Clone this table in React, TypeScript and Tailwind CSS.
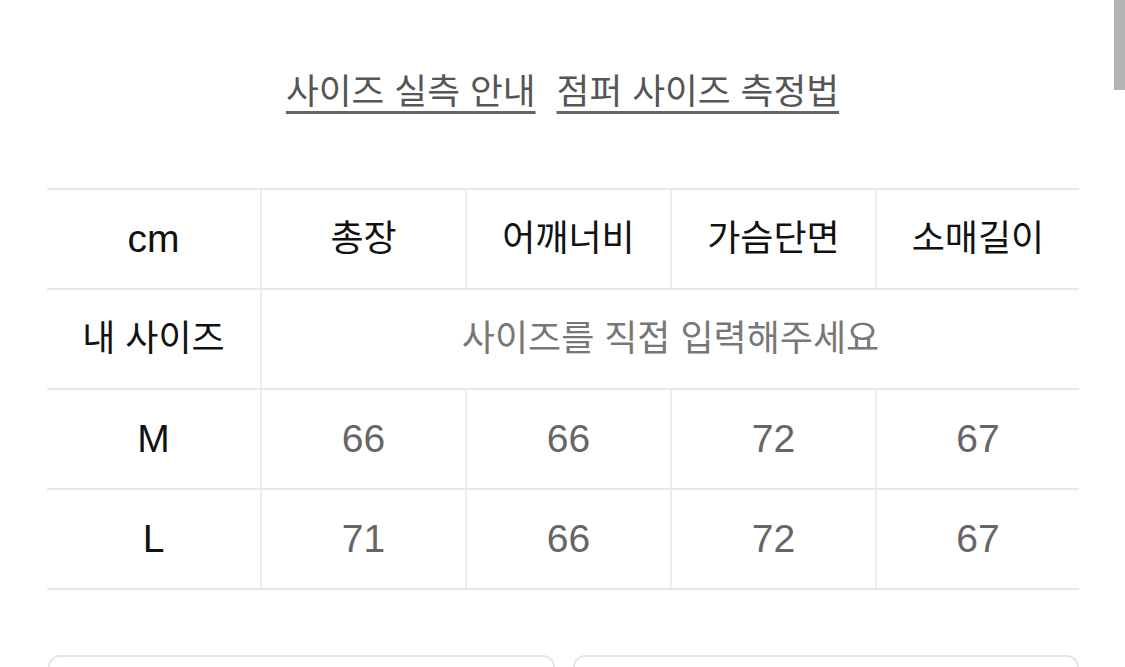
import React from "react";

const cols = ["총장", "어깨너비", "가슴단면", "소매길이"];

const rows = [
  { size: "M", values: ["66", "66", "72", "67"] },
  { size: "L", values: ["71", "66", "72", "67"] },
];

const font = { fontFamily: '"Liberation Sans", "Noto Sans CJK KR", sans-serif' };

export default function App() {
  return (
    <div
      className="relative h-[667px] w-[1125px] overflow-hidden bg-white"
      style={font}
    >
      {/* scrollbar thumb */}
      <div className="absolute right-0 top-0 h-[90px] w-[11px] bg-[#b3b3b3]" />

      <div className="flex justify-center gap-[21px] pt-[69px] text-[35.7px] leading-[46px] text-[#555]">
        <span className="underline decoration-[#666] decoration-[3px] underline-offset-[7px]">
          사이즈 실측 안내
        </span>
        <span className="underline decoration-[#666] decoration-[3px] underline-offset-[7px]">
          점퍼 사이즈 측정법
        </span>
      </div>

      <div className="ml-[47px] mt-[73px] w-[1032px] border-t-2 border-[#e8e8e8]">
        {/* header */}
        <div className="grid h-[100px] grid-cols-[213px_205px_205px_205px_204px] border-b-2 border-[#e8e8e8] text-[36px] text-[#111]">
          <div className="flex items-center justify-center text-[39px]">cm</div>
          {cols.map((c) => (
            <div
              key={c}
              className="flex items-center justify-center border-l-2 border-[#ededed]"
            >
              {c}
            </div>
          ))}
        </div>

        {/* my size */}
        <div className="grid h-[100px] grid-cols-[213px_819px] border-b-2 border-[#e8e8e8] text-[36px]">
          <div className="flex items-center justify-center text-[#111]">
            내 사이즈
          </div>
          <div className="flex items-center justify-center border-l-2 border-[#ededed] text-[#777]">
            사이즈를 직접 입력해주세요
          </div>
        </div>

        {rows.map((r) => (
          <div
            key={r.size}
            className="grid h-[100px] grid-cols-[213px_205px_205px_205px_204px] border-b-2 border-[#e8e8e8] text-[39px]"
          >
            <div className="flex items-center justify-center text-[#111]">
              {r.size}
            </div>
            {r.values.map((v, i) => (
              <div
                key={i}
                className="flex items-center justify-center border-l-2 border-[#ededed] text-[#666]"
              >
                {v}
              </div>
            ))}
          </div>
        ))}
      </div>

      <div className="ml-[48px] mt-[65px] flex w-[1031px] gap-[18px]">
        <div className="h-[60px] flex-1 rounded-[12px] border-2 border-[#e6e6e6]" />
        <div className="h-[60px] flex-1 rounded-[12px] border-2 border-[#e6e6e6]" />
      </div>
    </div>
  );
}
